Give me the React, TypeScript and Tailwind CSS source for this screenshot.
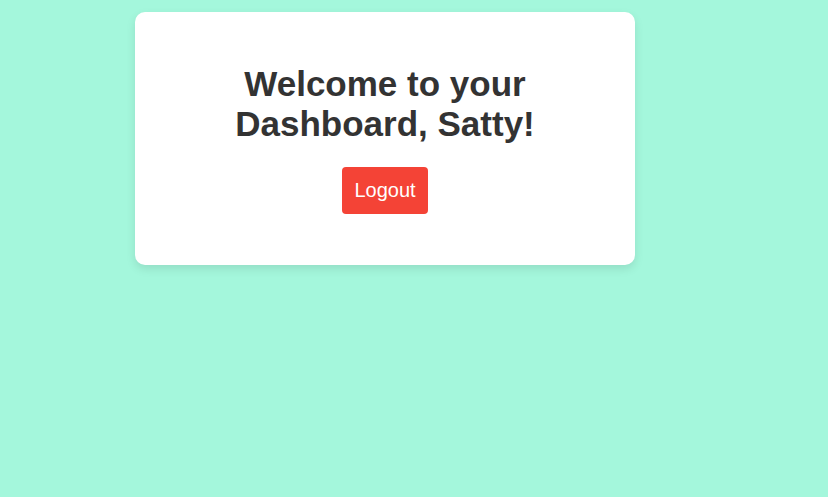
export default function App() {
  return (
    <div className="min-h-[497px] w-full bg-[#a4f7dc] pt-[12px] font-['Liberation_Sans',Arial,sans-serif]">
      <div className="ml-[135px] w-[500px] rounded-[10px] bg-white px-8 pt-8 pb-[51px] text-center shadow-[0_4px_10px_rgba(0,0,0,0.1)]">
        <h1 className="mx-auto mt-[20px] mb-[23px] text-[35px] leading-[40px] font-bold text-[#333]">
          Welcome to your
          <br />
          Dashboard, Satty!
        </h1>
        <button className="rounded-[4px] bg-[#f44336] px-3 py-3 text-[20px] leading-[23px] text-white">
          Logout
        </button>
      </div>
    </div>
  );
}
